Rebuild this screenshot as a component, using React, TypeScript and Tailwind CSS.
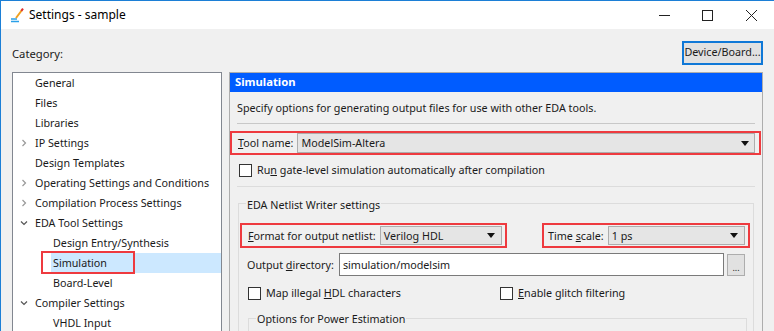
import React from "react";

const F = { fontFamily: '"Noto Sans", "Open Sans", sans-serif' };

function Chevron({ open }: { open?: boolean }) {
  return (
    <svg width="8" height="8" viewBox="0 0 8 8" className="shrink-0">
      {open ? (
        <path d="M1 2.5 L4 5.5 L7 2.5" fill="none" stroke="#555" strokeWidth="1.2" />
      ) : (
        <path d="M2.5 1 L5.5 4 L2.5 7" fill="none" stroke="#999" strokeWidth="1.2" />
      )}
    </svg>
  );
}

function TreeRow({
  label,
  level,
  chevron,
  selected,
  boxed,
}: {
  label: string;
  level: number;
  chevron?: "open" | "closed";
  selected?: boolean;
  boxed?: boolean;
}) {
  return (
    <div className="relative flex h-[20px] items-center">
      <div className="flex w-[22px] shrink-0 justify-end pr-[7px]">
        {chevron && <Chevron open={chevron === "open"} />}
      </div>
      {level === 1 ? <div className="w-[18px] shrink-0" /> : null}
      <div
        className={
          "flex h-[20px] flex-1 items-center whitespace-nowrap " +
          (selected ? "bg-[#cce8ff] -ml-[2px] pl-[2px]" : "")
        }
      >
        <span className="text-[#1a1a1a]">{label}</span>
      </div>
      {boxed && (
        <div className="pointer-events-none absolute left-[28px] top-[-2px] h-[23px] w-[94px] border-2 border-[#ee3a3f]" />
      )}
    </div>
  );
}

function Arrow() {
  return (
    <svg width="8" height="5" viewBox="0 0 8 5">
      <path d="M0 0 H8 L4 5 Z" fill="#111" />
    </svg>
  );
}

function Checkbox() {
  return <div className="h-[13px] w-[13px] shrink-0 border border-[#333] bg-white" />;
}

export default function App() {
  return (
    <div
      className="h-[331px] w-[774px] overflow-hidden border-l border-t border-[#1c7fd6] bg-[#f0f0f0] text-[10.75px] text-[#1a1a1a]"
      style={F}
    >
      {/* Title bar */}
      <div className="flex h-[28px] items-center bg-white">
        <svg width="16" height="16" viewBox="0 0 16 16" className="ml-[8px]">
          <path d="M2 12 H8" stroke="#2aa0e8" strokeWidth="1.5" />
          <path d="M2 14.5 H10" stroke="#2aa0e8" strokeWidth="1.5" />
          <path d="M7 11 L13 3" stroke="#f0a020" strokeWidth="2" />
          <path d="M12.3 3.9 L14 1.6" stroke="#e03030" strokeWidth="2" />
        </svg>
        <span className="ml-[4px] text-[12px] text-black">Settings - sample</span>
        <div className="flex-1" />
        <div className="flex h-full items-center">
          <div className="flex w-[44px] justify-center">
            <svg width="11" height="11" viewBox="0 0 11 11">
              <path d="M0 5.5 H11" stroke="#222" strokeWidth="1" />
            </svg>
          </div>
          <div className="flex w-[42px] justify-center">
            <svg width="11" height="11" viewBox="0 0 11 11">
              <rect x="0.5" y="0.5" width="10" height="10" fill="none" stroke="#222" strokeWidth="1" />
            </svg>
          </div>
          <div className="flex w-[46px] justify-center">
            <svg width="11" height="11" viewBox="0 0 11 11">
              <path d="M0 0 L11 11 M11 0 L0 11" stroke="#222" strokeWidth="1" />
            </svg>
          </div>
        </div>
      </div>

      {/* Body */}
      <div className="pl-[11px] pt-[11px]">
        <div className="flex h-[25px] items-center">
          <span className="mt-[4px] text-[11.25px]">Category:</span>
          <div className="flex-1" />
          <div className="mr-[11px] flex h-[24px] w-[81px] items-center justify-center whitespace-nowrap border-2 border-[#0f78d7] bg-[#e1e1e1]">
            Device/Board...
          </div>
        </div>

        <div className="mt-[7px] flex gap-[7px]">
          {/* Tree */}
          <div className="h-[270px] w-[210px] shrink-0 border border-[#828790] bg-white">
            <TreeRow label="General" level={0} />
            <TreeRow label="Files" level={0} />
            <TreeRow label="Libraries" level={0} />
            <TreeRow label="IP Settings" level={0} chevron="closed" />
            <TreeRow label="Design Templates" level={0} />
            <TreeRow label="Operating Settings and Conditions" level={0} chevron="closed" />
            <TreeRow label="Compilation Process Settings" level={0} chevron="closed" />
            <TreeRow label="EDA Tool Settings" level={0} chevron="open" />
            <TreeRow label="Design Entry/Synthesis" level={1} />
            <TreeRow label="Simulation" level={1} selected boxed />
            <TreeRow label="Board-Level" level={1} />
            <TreeRow label="Compiler Settings" level={0} chevron="open" />
            <TreeRow label="VHDL Input" level={1} />
          </div>

          {/* Right panel */}
          <div className="h-[270px] w-[534px] shrink-0 border border-[#adadad] bg-[#f0f0f0]">
            <div className="flex h-[19px] items-center bg-[#005cff] pl-[5px] text-[11.25px] font-bold text-white">
              Simulation
            </div>
            <div className="pl-[7px] pr-[7px]">
              <div className="flex h-[25px] items-end pb-[1px] whitespace-nowrap">
                Specify options for generating output files for use with other EDA tools.
              </div>
              <div className="mt-[6px] h-px bg-[#c8c8c8]" />
            </div>

            {/* Tool name */}
            <div className="mr-[1px] mt-[7px] flex h-[24px] items-center border-2 border-[#ee3a3f] pl-[6px] pr-[4px]">
              <span className="mr-[4px] whitespace-nowrap">
                <u>T</u>ool name:
              </span>
              <div className="flex h-[20px] flex-1 items-center justify-between border border-[#adadad] bg-[#e5e5e5] pl-[3px] pr-[5px]">
                <span>ModelSim-Altera</span>
                <Arrow />
              </div>
            </div>

            <div className="flex h-[24px] items-center gap-[5px] pl-[9px] pt-[7px]">
              <Checkbox />
              <span className="whitespace-nowrap">
                Ru<u>n</u> gate-level simulation automatically after compilation
              </span>
            </div>
            <div className="mx-[7px] mt-[7px] h-px bg-[#dcdcdc]" />

            {/* Group box */}
            <div className="ml-[8px] mr-[8px] mt-[16px] border border-[#dcdcdc] pb-[10px]">
              <div className="-mt-[7px] ml-[7px] w-fit whitespace-nowrap bg-[#f0f0f0] px-[1px]">
                EDA Netlist Writer settings
              </div>

              <div className="mt-[10px] flex items-center pl-[1px] pr-[3px]">
                <div className="flex h-[25px] w-[267px] items-center border-2 border-[#ee3a3f] pl-[6px] pr-[3px]">
                  <span className="mr-[4px] whitespace-nowrap">
                    <u>F</u>ormat for output netlist:
                  </span>
                  <div className="flex h-[19px] flex-1 items-center justify-between border border-[#adadad] bg-[#e5e5e5] pl-[3px] pr-[6px]">
                    <span>Verilog HDL</span>
                    <Arrow />
                  </div>
                </div>
                <div className="flex-1" />
                <div className="flex h-[25px] w-[208px] items-center border-2 border-[#ee3a3f] pl-[4px] pr-[3px]">
                  <span className="mr-[4px] whitespace-nowrap">
                    Time <u>s</u>cale:
                  </span>
                  <div className="flex h-[19px] flex-1 items-center justify-between border border-[#adadad] bg-[#e5e5e5] pl-[3px] pr-[6px]">
                    <span>1 ps</span>
                    <Arrow />
                  </div>
                </div>
              </div>

              <div className="mt-[5px] flex items-center pl-[8px] pr-[8px]">
                <span className="mr-[5px] whitespace-nowrap">
                  Output <u>d</u>irectory:
                </span>
                <div className="flex h-[23px] flex-1 items-center border border-[#7a7a7a] bg-white pl-[3px]">
                  simulation/modelsim
                </div>
                <div className="ml-[3px] flex h-[22px] w-[18px] items-end justify-center border border-[#adadad] bg-[#e1e1e1] pb-[3px] text-[9px] leading-none">
                  ...
                </div>
              </div>

              <div className="mt-[9px] flex items-center pl-[9px]">
                <div className="flex w-[252px] shrink-0 items-center">
                  <Checkbox />
                  <span className="ml-[5px] whitespace-nowrap">
                    Map illegal <u>H</u>DL characters
                  </span>
                </div>
                <div className="flex items-center">
                  <Checkbox />
                  <span className="ml-[5px] whitespace-nowrap">
                    <u>E</u>nable glitch filtering
                  </span>
                </div>
              </div>

              <div className="ml-[9px] mr-[6px] mt-[17px] h-[20px] border border-[#dcdcdc]">
                <div className="-mt-[8px] ml-[7px] w-fit whitespace-nowrap bg-[#f0f0f0] px-[1px]">
                  Options for Power Estimation
                </div>
              </div>
            </div>
          </div>
        </div>
      </div>
    </div>
  );
}
